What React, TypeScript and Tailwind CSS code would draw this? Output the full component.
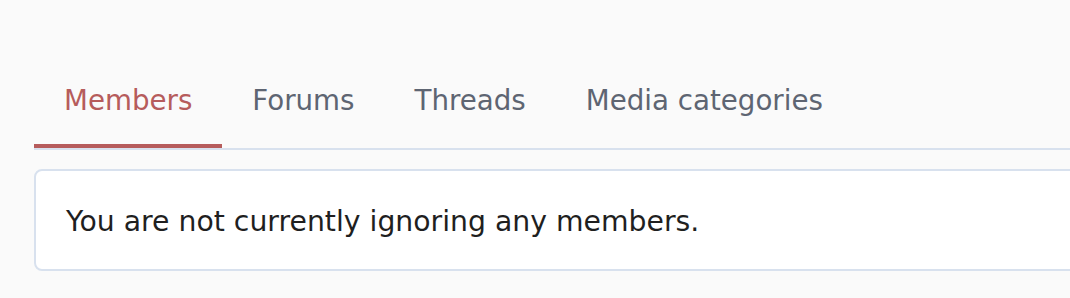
import React from 'react';

const tabs = ['Members', 'Forums', 'Threads', 'Media categories'];

export default function App() {
  return (
    <div
      className="w-[1070px] h-[298px] overflow-hidden bg-[#fafafa]"
      style={{ fontFamily: '"DejaVu Sans", Verdana, sans-serif' }}
    >
      <div className="w-[1100px] pl-[34px] pt-[56px]">
        {/* Tabs */}
        <div className="flex border-b-2 border-[#d8e1ee]">
          {tabs.map((t, i) => (
            <div
              key={t}
              className={
                i === 0
                  ? 'px-[30px] pt-[25px] pb-[23px] border-b-4 border-[#b65c5c] text-[#b65c5c] text-[27.7px] leading-[40px]'
                  : 'px-[30px] pt-[25px] pb-[23px] border-b-4 border-transparent text-[#5e6572] text-[27.7px] leading-[40px]'
              }
            >
              {t}
            </div>
          ))}
        </div>

        {/* Panel */}
        <div className="mt-[19px] h-[102px] flex items-center px-[30px] pt-[4px] bg-white border-2 border-[#d8e1ee] rounded-[8px] text-[28.3px] leading-[40px] text-[#1f1f1f]">
          You are not currently ignoring any members.
        </div>
      </div>
    </div>
  );
}
